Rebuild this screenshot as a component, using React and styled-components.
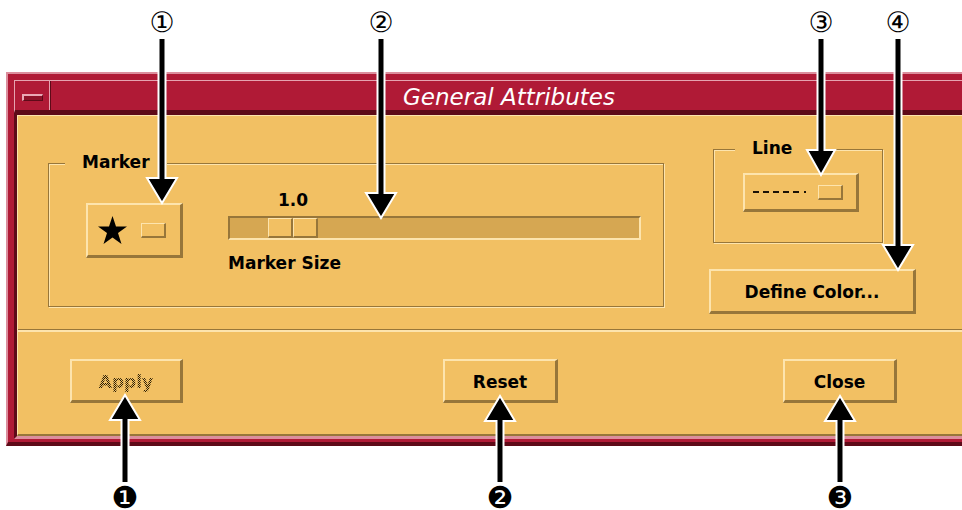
import styled, { createGlobalStyle } from 'styled-components';

const GlobalStyle = createGlobalStyle`
  html, body {
    margin: 0;
    padding: 0;
    background: #fff;
    overflow: hidden;
  }
`;

const YELLOW = '#f2c063';
const LIGHT = '#fde4ad';
const DARK = '#97763a';
const RED = '#b01a36';
const PINK = '#dc8e9d';
const DARKRED = '#5e0a18';

const Page = styled.div`
  position: relative;
  width: 962px;
  height: 510px;
  overflow: hidden;
  font-family: "DejaVu Sans", "Liberation Sans", sans-serif;
`;

const Window = styled.div`
  box-sizing: border-box;
  width: 990px;
  height: 374px;
  margin: 72px 0 0 6px;
  background: ${RED};
  border-style: solid;
  border-width: 2px 4px 4px 2px;
  border-color: ${PINK} ${DARKRED} ${DARKRED} ${PINK};
  padding: 6px 6px 3px 6px;
  display: flex;
  flex-direction: column;
`;

const TitleBar = styled.div`
  box-sizing: border-box;
  height: 33px;
  display: flex;
  border-top: 1px solid #e6a3b0;
  border-left: 1px solid #e6a3b0;
  border-bottom: 3px solid ${DARKRED};
`;

const MenuBox = styled.div`
  width: 34px;
  display: flex;
  align-items: center;
  justify-content: center;
  border-right: 1px solid #e6a3b0;
  box-shadow: 1px 0 0 ${DARKRED};
`;

const MenuGlyph = styled.div`
  box-sizing: border-box;
  width: 21px;
  height: 7px;
  margin-top: 3px;
  background: #8e1229;
  border-style: solid;
  border-width: 2px 1px 1px 2px;
  border-color: #eaa8b5 ${DARKRED} ${DARKRED} #eaa8b5;
`;

const Title = styled.div`
  flex: 1;
  display: flex;
  align-items: center;
  justify-content: center;
  padding: 3px 20px 0 2px;
  color: #fff;
  font-size: 23px;
  font-style: italic;
`;

const BodyWrap = styled.div`
  flex: 1;
  display: flex;
  border-left: 3px solid ${DARKRED};
  border-top: 2px solid ${DARKRED};
  border-bottom: 3px solid ${PINK};
`;

const Body = styled.div`
  flex: 1;
  display: flex;
  flex-direction: column;
  background: ${YELLOW};
  border-top: 1px solid ${LIGHT};
  border-left: 1px solid ${LIGHT};
  border-bottom: 2px solid ${DARK};
`;

const TopSection = styled.div`
  box-sizing: border-box;
  height: 214px;
  display: flex;
  align-items: flex-start;
  padding: 33px 0 0 30px;
  border-bottom: 1px solid ${DARK};
`;

const Separator = styled.div`
  height: 2px;
  background: ${LIGHT};
`;

const Frame = styled.div`
  position: relative;
  box-sizing: border-box;
  width: ${(p) => p.$w}px;
  height: ${(p) => p.$h}px;
  margin-top: ${(p) => p.$mt || 0}px;
  margin-left: ${(p) => p.$ml || 0}px;
  border: 1px solid ${DARK};
  box-shadow: inset 1px 1px 0 ${LIGHT}, 1px 1px 0 ${LIGHT};
  display: flex;
  align-items: flex-start;
`;

const FrameLabel = styled.span`
  position: absolute;
  top: -12px;
  left: ${(p) => p.$left}px;
  padding: 0 17px;
  line-height: 20px;
  background: ${YELLOW};
  font-size: 17px;
  font-weight: bold;
  color: #000;
`;

const Raised = styled.div`
  box-sizing: border-box;
  background: ${YELLOW};
  border-style: solid;
  border-width: 2px 3px 3px 2px;
  border-color: ${LIGHT} ${DARK} ${DARK} ${LIGHT};
`;

const OptionButton = styled(Raised)`
  width: ${(p) => p.$w}px;
  height: ${(p) => p.$h}px;
  margin-top: ${(p) => p.$mt}px;
  margin-left: ${(p) => p.$ml}px;
  padding-left: ${(p) => p.$pl}px;
  display: flex;
  align-items: center;
`;

const Indicator = styled.div`
  box-sizing: border-box;
  width: 25px;
  height: 15px;
  margin-left: ${(p) => p.$ml}px;
  background: ${YELLOW};
  border-style: solid;
  border-width: 1px 2px 2px 1px;
  border-color: ${LIGHT} ${DARK} ${DARK} ${LIGHT};
`;

const ScaleColumn = styled.div`
  width: 413px;
  margin: 26px 0 0 45px;
  display: flex;
  flex-direction: column;
`;

const ScaleValue = styled.div`
  width: 50px;
  margin-left: ${(p) => p.$offset}px;
  text-align: center;
  font-size: 17px;
  font-weight: bold;
  line-height: 20px;
`;

const Trough = styled.div`
  box-sizing: border-box;
  height: 24px;
  margin-top: 6px;
  display: flex;
  background: #d6a752;
  border-style: solid;
  border-width: 2px;
  border-color: ${DARK} ${LIGHT} ${LIGHT} ${DARK};
`;

const Thumb = styled.div`
  display: flex;
  width: 50px;
  margin-left: ${(p) => p.$offset}px;
`;

const ThumbHalf = styled.div`
  box-sizing: border-box;
  flex: 1;
  background: ${YELLOW};
  border-style: solid;
  border-width: 1px 2px 2px 1px;
  border-color: ${LIGHT} ${DARK} ${DARK} ${LIGHT};
`;

const ScaleLabel = styled.div`
  margin-top: 13px;
  font-size: 17px;
  font-weight: bold;
  line-height: 20px;
`;

const RightColumn = styled.div`
  margin-left: 45px;
  display: flex;
  flex-direction: column;
`;

const PushButton = styled(Raised)`
  width: ${(p) => p.$w}px;
  height: ${(p) => p.$h || 44}px;
  margin-top: ${(p) => p.$mt || 0}px;
  margin-left: ${(p) => p.$ml || 0}px;
  display: flex;
  align-items: center;
  justify-content: center;
  padding-top: 2px;
  font-size: 17px;
  font-weight: bold;
  color: #000;
`;

const Dimmed = styled.span`
  color: transparent;
  background-image: repeating-conic-gradient(#2a1d05 0 25%, transparent 0 50%);
  background-size: 2px 2px;
  -webkit-background-clip: text;
  background-clip: text;
`;

const BottomSection = styled.div`
  flex: 1;
  display: flex;
  align-items: flex-start;
  padding: 27px 0 0 52px;
`;

const Overlay = styled.svg`
  position: absolute;
  left: 0;
  top: 0;
  pointer-events: none;
`;

const Callout = styled.text`
  font-family: "DejaVu Sans", sans-serif;
  font-size: ${(p) => p.$size}px;
  fill: #000;
`;

const Star = () => (
  <svg width="31" height="31" viewBox="0 0 31 31">
    <polygon
      points="15.5,1 19,11.5 30,11.5 21,18 24.5,29 15.5,22.5 6.5,29 10,18 1,11.5 12,11.5"
      fill="#000"
    />
  </svg>
);

const Dashes = () => (
  <svg width="54" height="6" viewBox="0 0 54 6">
    <line x1="0" y1="3" x2="49" y2="3" stroke="#1a1206" strokeWidth="2" strokeDasharray="6 4" />
    <rect x="51" y="2" width="2" height="2" fill="#1a1206" />
  </svg>
);

const arrowDown = (x, y0, tip, half = 15) =>
  `${x - 3.5},${y0} ${x + 3.5},${y0} ${x + 3.5},${tip - 25} ${x + half},${tip - 25} ${x},${tip} ${x - half},${tip - 25} ${x - 3.5},${tip - 25}`;

const arrowUp = (x, y1, tip, half = 15) =>
  `${x - 3.5},${y1} ${x + 3.5},${y1} ${x + 3.5},${tip + 25} ${x + half},${tip + 25} ${x},${tip} ${x - half},${tip + 25} ${x - 3.5},${tip + 25}`;

const topCallouts = [
  { n: '①', x: 162, tip: 203 },
  { n: '②', x: 381, tip: 218 },
  { n: '③', x: 821, tip: 175, half: 14 },
  { n: '④', x: 898, tip: 270 },
];

const bottomCallouts = [
  { n: '❶', x: 125, tip: 395 },
  { n: '❷', x: 500, tip: 396 },
  { n: '❸', x: 840, tip: 396 },
];

const Annotations = () => (
  <Overlay width="962" height="510" viewBox="0 0 962 510">
    {topCallouts.map((c) => (
      <g key={c.n}>
        <polygon points={arrowDown(c.x, 38, c.tip, c.half)} fill="#000" stroke="#fff" strokeWidth="2" />
        <Callout $size={28} x={c.x} y={22} textAnchor="middle" dominantBaseline="central">
          {c.n}
        </Callout>
      </g>
    ))}
    {bottomCallouts.map((c) => (
      <g key={c.n}>
        <polygon points={arrowUp(c.x, 483, c.tip)} fill="#000" stroke="#fff" strokeWidth="2" />
        <Callout $size={30} x={c.x} y={497} textAnchor="middle" dominantBaseline="central">
          {c.n}
        </Callout>
      </g>
    ))}
  </Overlay>
);

export default function App() {
  return (
    <Page>
      <GlobalStyle />
      <Window>
        <TitleBar>
          <MenuBox>
            <MenuGlyph />
          </MenuBox>
          <Title>General Attributes</Title>
        </TitleBar>
        <BodyWrap>
          <Body>
            <TopSection>
              <Frame $w={616} $h={144} $mt={14}>
                <FrameLabel $left={16}>Marker</FrameLabel>
                <OptionButton $w={97} $h={55} $mt={39} $ml={37} $pl={9}>
                  <Star />
                  <Indicator $ml={13} />
                </OptionButton>
                <ScaleColumn>
                  <ScaleValue $offset={40}>1.0</ScaleValue>
                  <Trough>
                    <Thumb $offset={38}>
                      <ThumbHalf />
                      <ThumbHalf />
                    </Thumb>
                  </Trough>
                  <ScaleLabel>Marker Size</ScaleLabel>
                </ScaleColumn>
              </Frame>
              <RightColumn>
                <Frame $w={170} $h={94} $ml={4}>
                  <FrameLabel $left={21}>Line</FrameLabel>
                  <OptionButton $w={116} $h={39} $mt={23} $ml={29} $pl={8}>
                    <Dashes />
                    <Indicator $ml={11} />
                  </OptionButton>
                </Frame>
                <PushButton $w={207} $h={45} $mt={26}>Define Color...</PushButton>
              </RightColumn>
            </TopSection>
            <Separator />
            <BottomSection>
              <PushButton $w={113}>
                <Dimmed>Apply</Dimmed>
              </PushButton>
              <PushButton $w={115} $ml={260}>Reset</PushButton>
              <PushButton $w={114} $ml={225}>Close</PushButton>
            </BottomSection>
          </Body>
        </BodyWrap>
      </Window>
      <Annotations />
    </Page>
  );
}
